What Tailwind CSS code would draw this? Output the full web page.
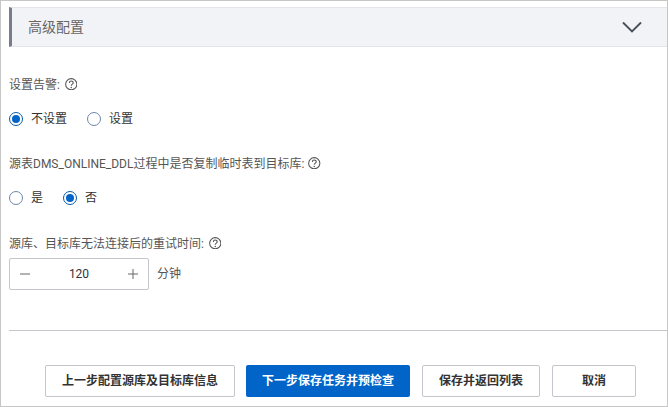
<!DOCTYPE html>
<html lang="zh-CN">
<head>
<meta charset="utf-8">
<script src="https://cdn.jsdelivr.net/npm/@tailwindcss/browser@4"></script>
</head>
<body class="bg-white">
<div class="w-[668px] h-[407px] border border-[#c6c6c6] pl-2 pt-[6px] overflow-hidden flex flex-col text-[12px] text-[#555] font-['Roboto','Noto_Sans_CJK_SC',sans-serif]">
  <div class="h-[40px] shrink-0 flex items-center justify-between bg-[#f2f3f7] border-y border-[#e3e5ea] border-l-[3px] border-l-[#7b7b8b] pl-[16px] pr-[25px]">
    <span class="text-[14px] text-[#666]">高级配置</span>
    <svg class="w-[20px] h-[12px]" viewBox="0 0 20 12" fill="none"><path d="M1 1.500 L10 10.500 L19 1.500" stroke="#4a5058" stroke-width="1.900"/></svg>
  </div>

  <div class="mt-[29px] h-[18px] flex items-center gap-[5px]">
    <span>设置告警:</span>
    <svg class="w-[12.500px] h-[12.500px] -translate-y-px" viewBox="0 0 12 12" fill="none"><circle cx="6" cy="6" r="5.400" stroke="#555" stroke-width="1"/><path d="M4.200 4.700 C4.200 2.400 7.900 2.400 7.900 4.600 C7.900 5.900 6 5.900 6 7.500" stroke="#555" stroke-width="1"/><circle cx="6" cy="9.100" r="0.700" fill="#555"/></svg>
  </div>
  <div class="mt-[15px] h-[20px] flex items-center text-[#333]">
    <span class="w-[14px] h-[14px] rounded-full border border-[#0a5aa8] flex items-center justify-center"><span class="w-[8px] h-[8px] rounded-full bg-[#0064c8]"></span></span>
    <span class="ml-[8px] w-[36px]">不设置</span>
    <span class="ml-[20px] w-[14px] h-[14px] rounded-full border border-[#6b87a8]"></span>
    <span class="ml-[8px]">设置</span>
  </div>

  <div class="mt-[26px] h-[18px] flex items-center gap-[4px]">
    <span>源表DMS_ONLINE_DDL过程中是否复制临时表到目标库:</span>
    <svg class="w-[12.500px] h-[12.500px] -translate-y-px" viewBox="0 0 12 12" fill="none"><circle cx="6" cy="6" r="5.400" stroke="#555" stroke-width="1"/><path d="M4.200 4.700 C4.200 2.400 7.900 2.400 7.900 4.600 C7.900 5.900 6 5.900 6 7.500" stroke="#555" stroke-width="1"/><circle cx="6" cy="9.100" r="0.700" fill="#555"/></svg>
  </div>
  <div class="mt-[15px] h-[20px] flex items-center text-[#333]">
    <span class="w-[14px] h-[14px] rounded-full border border-[#6b87a8]"></span>
    <span class="ml-[8px] w-[12px]">是</span>
    <span class="ml-[20px] w-[14px] h-[14px] rounded-full border border-[#0a5aa8] flex items-center justify-center"><span class="w-[8px] h-[8px] rounded-full bg-[#0064c8]"></span></span>
    <span class="ml-[8px]">否</span>
  </div>

  <div class="mt-[27px] h-[18px] flex items-center gap-[5px]">
    <span>源库、目标库无法连接后的重试时间:</span>
    <svg class="w-[12.500px] h-[12.500px] -translate-y-px" viewBox="0 0 12 12" fill="none"><circle cx="6" cy="6" r="5.400" stroke="#555" stroke-width="1"/><path d="M4.200 4.700 C4.200 2.400 7.900 2.400 7.900 4.600 C7.900 5.900 6 5.900 6 7.500" stroke="#555" stroke-width="1"/><circle cx="6" cy="9.100" r="0.700" fill="#555"/></svg>
  </div>
  <div class="mt-[5px] h-[32px] flex items-center">
    <div class="w-[140px] h-[32px] border border-[#c4c6cc] rounded-[2px] flex items-center justify-between px-[10px] text-[#333]">
      <svg class="w-[10px] h-[10px]" viewBox="0 0 10 10"><path d="M0 5 H10" stroke="#666" stroke-width="1"/></svg>
      <span>120</span>
      <svg class="w-[10px] h-[10px]" viewBox="0 0 10 10"><path d="M0 5 H10 M5 0 V10" stroke="#666" stroke-width="1"/></svg>
    </div>
    <span class="ml-[8px]">分钟</span>
  </div>

  <div class="mt-[40px] h-px shrink-0 bg-[#c6c6cc]"></div>

  <div class="mt-[34px] flex pl-[36px] font-bold text-[#333]">
    <button class="w-[190px] h-[32px] border border-[#c4c6cc] rounded-[2px] bg-white">上一步配置源库及目标库信息</button>
    <button class="ml-[11px] w-[164px] h-[32px] rounded-[2px] bg-[#0064c8] text-white">下一步保存任务并预检查</button>
    <button class="ml-[12px] w-[118px] h-[32px] border border-[#c4c6cc] rounded-[2px] bg-white">保存并返回列表</button>
    <button class="ml-[12px] w-[84px] h-[32px] border border-[#c4c6cc] rounded-[2px] bg-white">取消</button>
  </div>
</div>
</body>
</html>
